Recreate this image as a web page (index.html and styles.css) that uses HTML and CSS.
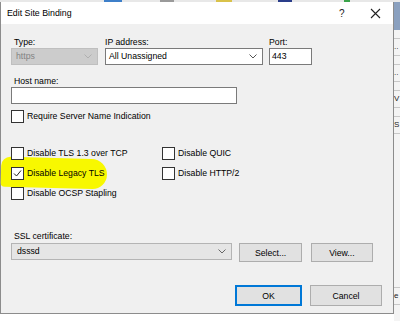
FILE: index.html
```html
<!DOCTYPE html>
<html lang="en">
<head>
    <meta charset="UTF-8">
    <meta name="viewport" content="width=device-width, initial-scale=1.0">
    <title>Edit Site Binding</title>
    <link rel="stylesheet" href="styles.css">
</head>
<body>

<div class="strip">
    <span class="bit b1"></span>
    <span class="bit b2"></span>
    <span class="bit b3"></span>
    <span class="bit b4"></span>
    <span class="bit b5"></span>
</div>

<div class="screen">
    <div class="dialog">
        <div class="titlebar">
            <span class="title">Edit Site Binding</span>
            <span class="help">?</span>
            <span class="close">
                <svg width="11" height="11" viewBox="0 0 11 11"><path d="M1 1L10 10M10 1L1 10" stroke="#222" stroke-width="1.1"/></svg>
            </span>
        </div>

        <div class="body">
            <div class="row-fields">
                <div class="field f-type">
                    <label class="lbl">Type:</label>
                    <div class="combo disabled">
                        <span>https</span>
                        <svg class="chev" width="8" height="5" viewBox="0 0 8 5"><path d="M0.5 0.5L4 4L7.5 0.5" fill="none" stroke="#b0b0b0"/></svg>
                    </div>
                </div>
                <div class="field f-ip">
                    <label class="lbl flush">IP address:</label>
                    <div class="combo edit">
                        <span>All Unassigned</span>
                        <svg class="chev" width="8" height="5" viewBox="0 0 8 5"><path d="M0.5 0.5L4 4L7.5 0.5" fill="none" stroke="#555"/></svg>
                    </div>
                </div>
                <div class="field f-port">
                    <label class="lbl flush">Port:</label>
                    <div class="textbox">443</div>
                </div>
            </div>

            <label class="lbl host-lbl">Host name:</label>
            <div class="textbox host"></div>

            <div class="check sni"><span class="box"></span>Require Server Name Indication</div>

            <div class="options">
                <div class="marker"></div>
                <div class="check"><span class="box"></span>Disable TLS 1.3 over TCP</div>
                <div class="check"><span class="box"></span>Disable QUIC</div>
                <div class="check"><span class="box checked">
                    <svg width="9" height="9" viewBox="0 0 9 9"><path d="M1 4.5L3.5 7L8 1.5" fill="none" stroke="#222" stroke-width="1"/></svg>
                </span>Disable Legacy TLS</div>
                <div class="check"><span class="box"></span>Disable HTTP/2</div>
                <div class="check"><span class="box"></span>Disable OCSP Stapling</div>
            </div>

            <label class="lbl ssl-lbl">SSL certificate:</label>
            <div class="ssl-row">
                <div class="combo cert">
                    <span>dsssd</span>
                    <svg class="chev" width="8" height="5" viewBox="0 0 8 5"><path d="M0.5 0.5L4 4L7.5 0.5" fill="none" stroke="#666"/></svg>
                </div>
                <button class="btn">Select...</button>
                <button class="btn">View...</button>
            </div>

            <div class="footer">
                <button class="btn default">OK</button>
                <button class="btn cancel">Cancel</button>
            </div>
        </div>
    </div>

    <div class="behind">
        <div class="bh-top"></div>
        <div class="bh-row">..</div>
        <div class="bh-row">..</div>
        <div class="bh-row">V</div>
        <div class="bh-row">S</div>
        <div class="bh-fill"></div>
        <div class="bh-row">e</div>
    </div>
</div>

</body>
</html>
```

FILE: styles.css
```css
body {
    margin: 0;
    padding: 0;
    background-color: #fff;
    font-family: "Liberation Sans", Arial, sans-serif;
    font-size: 8.7px;
    color: #000;
    width: 400px;
    height: 321px;
    overflow: hidden;
}
.strip {
    height: 2px;
    display: flex;
    background-color: #e8e8e8;
}
.bit {
    height: 2px;
}
.b1 { width: 18px; margin-left: 104px; background-color: #3d7fc9; }
.b2 { width: 14px; margin-left: 38px; background-color: #9a9a9a; }
.b3 { width: 16px; margin-left: 42px; background-color: #d9c24a; }
.b4 { width: 14px; margin-left: 46px; background-color: #2a3d8a; }
.b5 { width: 6px; margin-left: 52px; background-color: #3aa34a; }

.screen {
    display: flex;
    align-items: flex-start;
}
.dialog {
    width: 392px;
    height: 311px;
    border: 1px solid #8c8c8c;
    border-top: none;
    background-color: #f0f0f0;
    display: flex;
    flex-direction: column;
}
.titlebar {
    height: 22px;
    background-color: #fff;
    display: flex;
    align-items: center;
}
.title {
    margin-left: 6px;
    font-size: 8.8px;
    flex: 1;
}
.help {
    font-size: 10px;
    width: 10px;
    margin-right: 21px;
    color: #222;
}
.close {
    display: flex;
    margin-right: 12px;
}

.body {
    padding: 12px 11px 0 10px;
    position: relative;
}
.lbl {
    display: block;
    height: 12px;
    line-height: 12px;
    padding-left: 3px;
}
.lbl.flush {
    padding-left: 0;
}
.row-fields {
    display: flex;
}
.f-type { width: 87px; margin-right: 7px; }
.f-ip { width: 158px; margin-right: 6px; }
.f-port { width: 43px; }

.combo,
.textbox {
    height: 15px;
    line-height: 15px;
    border: 1px solid #7a7a7a;
    background-color: #fff;
    padding: 0 4px;
    display: flex;
    align-items: center;
    justify-content: space-between;
}
.textbox {
    padding: 0 2px;
}
.combo.disabled {
    background-color: #cccccc;
    border-color: #bfbfbf;
    color: #838383;
    padding-left: 4px;
}
.combo.edit {
    padding-left: 3px;
}
.chev {
    margin-right: 1px;
}
.host-lbl {
    margin-top: 10px;
}
.textbox.host {
    width: 220px;
}
.check {
    display: flex;
    align-items: center;
    height: 20px;
    position: relative;
}
.box {
    width: 11px;
    height: 11px;
    border: 1px solid #333;
    background-color: #fff;
    margin-right: 3px;
    display: flex;
    align-items: center;
    justify-content: center;
}
.check.sni {
    height: 14px;
    margin-top: 5px;
}
.options {
    margin-top: 20px;
    display: grid;
    grid-template-columns: 151px 1fr;
    position: relative;
}
.marker {
    position: absolute;
    left: -10px;
    top: 15px;
    width: 106px;
    height: 30px;
    background-color: #f8f800;
    border-radius: 14px 24px 22px 6px;
    transform: rotate(1.5deg);
}
.ssl-lbl {
    margin-top: 27px;
}
.ssl-row {
    margin-top: 1px;
    display: flex;
    align-items: flex-start;
}
.combo.cert {
    width: 213px;
    background-color: #e5e5e5;
    border-color: #b4b4b4;
    padding-left: 5px;
    margin-right: 7px;
}
.btn {
    font-family: "Liberation Sans", Arial, sans-serif;
    font-size: 8.7px;
    color: #000;
    background-color: #e1e1e1;
    border: 1px solid #adadad;
    padding: 0;
    height: 19px;
    width: 63px;
    margin-right: 9px;
}
.footer {
    margin-top: 23px;
    display: flex;
    justify-content: flex-end;
}
.btn.default {
    width: 67px;
    height: 21px;
    border: 2px solid #0078d7;
    margin-right: 8px;
}
.btn.cancel {
    width: 72px;
    height: 21px;
    margin-right: 0;
}

.behind {
    flex: 1;
    display: flex;
    flex-direction: column;
    height: 319px;
    background-color: #f4f4f4;
    font-size: 8px;
    overflow: hidden;
}
.bh-top {
    height: 28px;
    background-color: #8aa0bf;
}
.bh-row {
    height: 16px;
    line-height: 16px;
    border-top: 1px solid #c8c8c8;
    border-bottom: 1px solid #c8c8c8;
    margin-top: 8px;
    color: #222;
}
.bh-fill {
    flex: 1;
}
.bh-row:last-child {
    margin-bottom: 16px;
}
```
